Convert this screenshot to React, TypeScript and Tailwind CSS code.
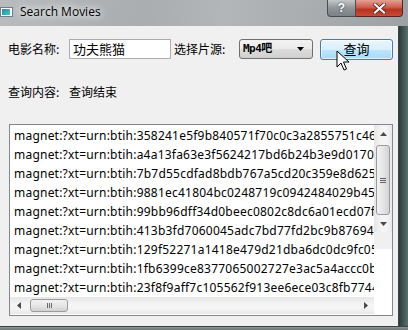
import React from 'react';

const LINKS = [
  'magnet:?xt=urn:btih:358241e5f9b840571f70c0c3a2855751c46c1a9e',
  'magnet:?xt=urn:btih:a4a13fa63e3f5624217bd6b24b3e9d01703a8e2f',
  'magnet:?xt=urn:btih:7b7d55cdfad8bdb767a5cd20c359e8d6253e7b1c',
  'magnet:?xt=urn:btih:9881ec41804bc0248719c0942484029b4580d6a1',
  'magnet:?xt=urn:btih:99bb96dff34d0beec0802c8dc6a01ecd07f3a2b9',
  'magnet:?xt=urn:btih:413b3fd7060045adc7bd77fd2bc9b87694f1c2d3',
  'magnet:?xt=urn:btih:129f52271a1418e479d21dba6dc0dc9fc05e7a41',
  'magnet:?xt=urn:btih:1fb6399ce8377065002727e3ac5a4accc0b9d8e2',
  'magnet:?xt=urn:btih:23f8f9aff7c105562f913ee6ece03c8fb7744b1a',
];

const cjk = "font-['Noto_Sans_CJK_SC',sans-serif]";

function TitleBar() {
  return (
    <div className="h-[26px] flex items-start bg-[linear-gradient(100deg,#b9bcbe_0%,#a9adb0_35%,#b3b6b8_55%,#9da2a5_100%)]">
      <div className="mt-[7px] w-[13px] h-[10px] bg-white border border-[#6d7f8c] flex items-center pl-[1px]">
        <div className="w-[8px] h-[6px] bg-[linear-gradient(135deg,#1c8fa0,#4ec1c9)]" />
      </div>
      <div className="ml-[7px] mt-[4px] text-[12px] leading-[16px] text-black font-['Open_Sans',sans-serif] [text-shadow:0_0_6px_#ffffff,0_0_10px_#ffffff]">
        Search Movies
      </div>
      <div className="ml-auto mr-[5px] flex">
        <div className="w-[29px] h-[17px] rounded-bl-[4px] border border-t-0 border-[#4a4d50] bg-[linear-gradient(#c5c8ca,#8f9599_50%,#7a8084)] flex items-center justify-center text-white text-[12px] font-bold font-['Liberation_Sans',sans-serif] [text-shadow:0_0_2px_#333]">
          ?
        </div>
        <div className="w-[47px] h-[17px] rounded-br-[4px] border border-t-0 border-l-0 border-[#5a2320] bg-[linear-gradient(#e3a094,#cf5e4d_45%,#b8321f_60%,#c94a36)] flex items-center justify-center">
          <svg width="13" height="11" viewBox="0 0 13 11">
            <path d="M2 1.5 L11 9.5 M11 1.5 L2 9.5" stroke="#3a1a16" strokeWidth="3.6" strokeLinecap="square" />
            <path d="M2 1.5 L11 9.5 M11 1.5 L2 9.5" stroke="#ffffff" strokeWidth="2.2" strokeLinecap="square" />
          </svg>
        </div>
      </div>
    </div>
  );
}

function Arrow({ dir }: { dir: 'up' | 'down' | 'left' | 'right' }) {
  const pts = {
    up: '0,4 3.5,0 7,4',
    down: '0,0 3.5,4 7,0',
    left: '4,0 0,3.5 4,7',
    right: '0,0 4,3.5 0,7',
  }[dir];
  const vert = dir === 'up' || dir === 'down';
  return (
    <svg width={vert ? 7 : 4} height={vert ? 4 : 7} viewBox={vert ? '0 0 7 4' : '0 0 4 7'}>
      <polygon points={pts} fill="#4a4a4a" />
    </svg>
  );
}

function VScroll() {
  return (
    <div className="w-[18px] flex flex-col bg-[linear-gradient(90deg,#e6e6e6,#f4f4f4_40%,#f4f4f4_70%,#e8e8e8)]">
      <div className="h-[17px] flex items-center justify-center">
        <Arrow dir="up" />
      </div>
      <div className="flex-1 px-[2px] pt-[3px]">
        <div className="h-[70px] rounded-[3px] border border-[#9b9b9b] bg-[linear-gradient(90deg,#f2f2f2,#e6e6e6_50%,#d2d2d2)] flex flex-col items-center justify-center gap-[1px]">
          <div className="w-[6px] h-[1px] bg-[#6a5a6a]" />
          <div className="w-[6px] h-[1px] bg-[#6a5a6a]" />
          <div className="w-[6px] h-[1px] bg-[#6a5a6a]" />
        </div>
      </div>
      <div className="h-[17px] flex items-center justify-center">
        <Arrow dir="down" />
      </div>
    </div>
  );
}

function HScroll() {
  return (
    <div className="h-[17px] flex bg-[linear-gradient(#e6e6e6,#f4f4f4_40%,#f4f4f4_70%,#e8e8e8)]">
      <div className="w-[17px] flex items-center justify-center">
        <Arrow dir="left" />
      </div>
      <div className="flex-1 py-[2px] pl-[3px]">
        <div className="w-[38px] h-full rounded-[3px] border border-[#9b9b9b] bg-[linear-gradient(#f2f2f2,#e6e6e6_50%,#d2d2d2)] flex items-center justify-center gap-[1px]">
          <div className="w-[1px] h-[5px] bg-[#6a6a6a]" />
          <div className="w-[1px] h-[5px] bg-[#6a6a6a]" />
          <div className="w-[1px] h-[5px] bg-[#6a6a6a]" />
        </div>
      </div>
      <div className="w-[17px] flex items-center justify-center">
        <Arrow dir="right" />
      </div>
    </div>
  );
}

function ResultList() {
  return (
    <div className="ml-[9px] mt-[22px] w-[384px] h-[192px] border border-[#828790] bg-white flex">
      <div className="flex-1 flex flex-col min-w-0">
        <div className="h-[172px] overflow-hidden pl-[4px] pt-[1px]">
          {LINKS.map(link => (
            <div key={link} className="h-[19px] leading-[19px] whitespace-nowrap text-[12px] tracking-[0.22px] text-black font-['Noto_Sans',sans-serif]">
              {link}
            </div>
          ))}
        </div>
        <HScroll />
      </div>
      <div className="flex flex-col">
        <VScroll />
        <div className="h-[17px] bg-[#f0f0f0]" />
      </div>
    </div>
  );
}

function Cursor() {
  return (
    <svg className="absolute left-[336px] top-[50px]" width="14" height="22" viewBox="0 0 14 22">
      <path d="M1 1 L1 17 L5 13 L8 20 L10.5 19 L7.5 12 L13 12 Z" fill="#ffffff" stroke="#000000" strokeWidth="1" strokeLinejoin="miter" />
    </svg>
  );
}

function Client() {
  return (
    <div className={`w-[399px] h-[300px] bg-[#f0f0f0] border-r border-[#3a4444] ${cjk} text-[12px] text-black flex flex-col`}>
      <div className="mt-[12px] h-[22px] flex items-center">
        <span className="ml-[8px] w-[61px]">电影名称:</span>
        <div className="w-[102px] h-[20px] border border-[#abadb3] bg-white flex items-center pl-[3px] text-[13px]">
          功夫熊猫
        </div>
        <span className="ml-[3px] w-[65px]">选择片源:</span>
        <div className="w-[74px] h-[20px] rounded-[3px] border border-[#707070] bg-[linear-gradient(#f2f2f2,#ebebeb_50%,#dddddd_50%,#cfcfcf)] flex items-center pl-[3px] pr-[8px]">
          <span className="font-['DejaVu_Sans_Mono','Noto_Sans_CJK_SC',monospace] text-[11px] font-bold tracking-[-0.5px]">Mp4吧</span>
          <span className="ml-auto">
            <svg width="7" height="4" viewBox="0 0 7 4">
              <polygon points="0,0 3.5,4 7,0" fill="#000" />
            </svg>
          </span>
        </div>
        <div className="ml-[7px] w-[73px] h-[21px] rounded-[3px] border border-[#3c7fb1] bg-[linear-gradient(#eaf6fd,#d9f0fc_50%,#bee6fd_50%,#a7d9f5)] flex items-center justify-center text-[13px] shadow-[inset_0_0_0_1px_#ffffffaa]">
          查询
        </div>
      </div>
      <div className="mt-[22px] h-[20px] flex items-center pl-[8px]">
        <span className="w-[61px]">查询内容:</span>
        <span>查询结束</span>
      </div>
      <ResultList />
    </div>
  );
}

export default function App() {
  return (
    <div className="relative w-[408px] h-[330px] overflow-hidden flex flex-col bg-[#a4a8ab]">
      <TitleBar />
      <div className="flex">
        <Client />
        <div className="flex-1 bg-[linear-gradient(90deg,#2e3a3a,#56716b)]" />
      </div>
      <div className="flex-1 border-t border-[#3a4444] bg-[linear-gradient(#8f9698,#6c7476)]" />
      <Cursor />
    </div>
  );
}
